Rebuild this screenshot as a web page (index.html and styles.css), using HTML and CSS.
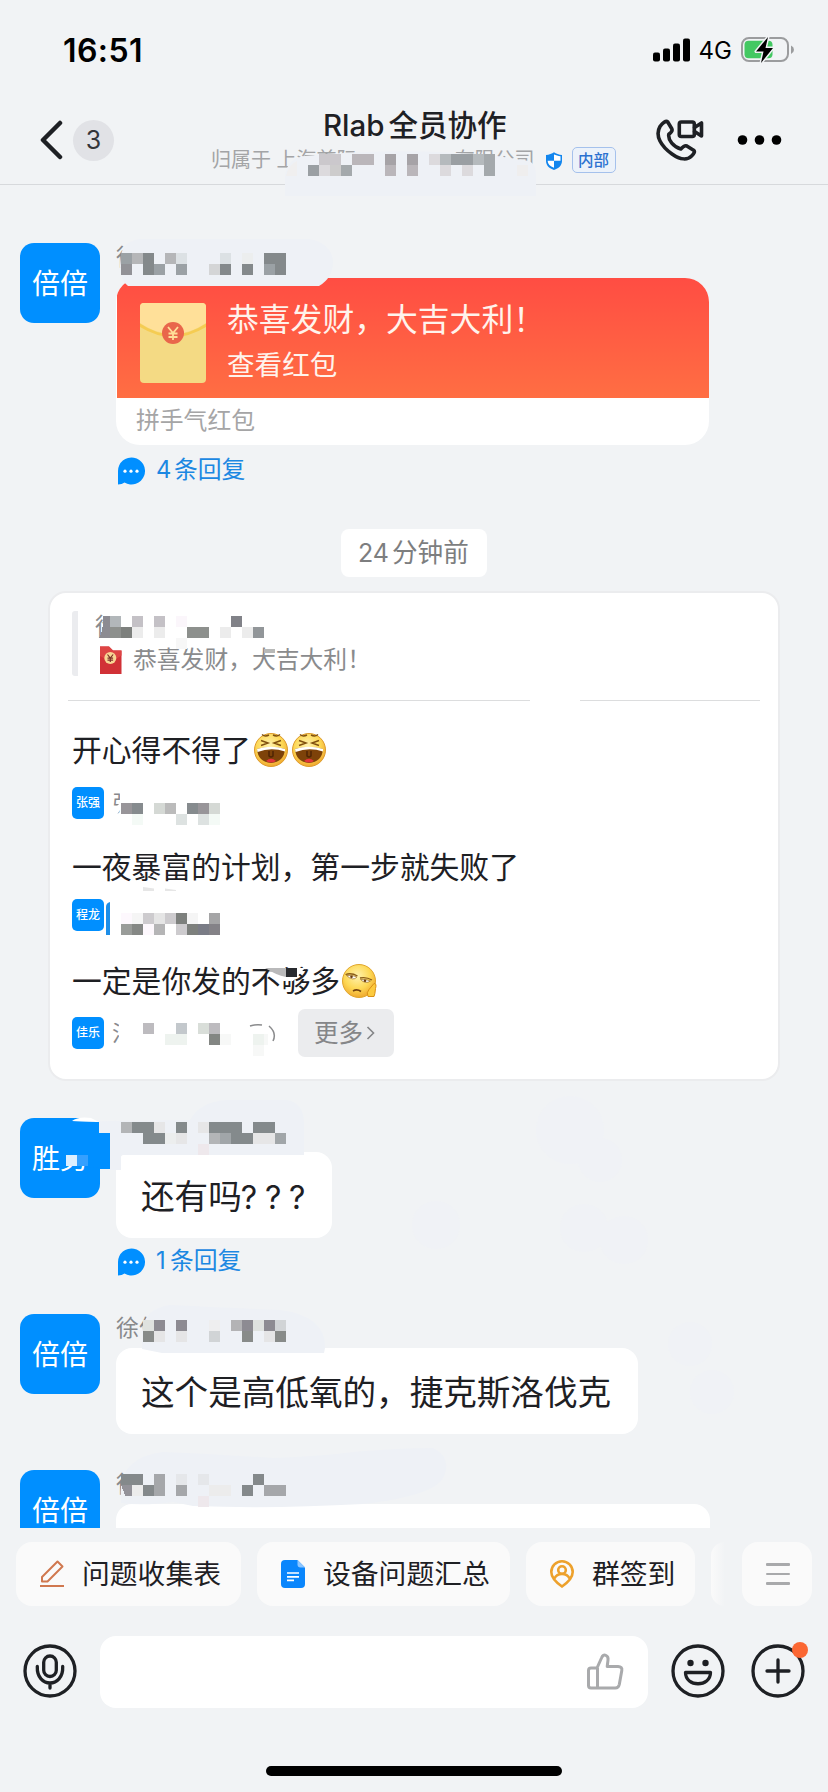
FILE: index.html
```html
<!DOCTYPE html>
<html lang="zh-CN">
<head>
<meta charset="utf-8">
<title>Rlab 全员协作</title>
<link rel="stylesheet" href="styles.css">
</head>
<body>
<div class="phone">
  <div class="status">
    <span class="clock">16:51</span>
    <div class="status-right">
      <svg width="38" height="24" viewBox="0 0 38 24"><rect x="0" y="14.500" width="7" height="9" rx="2"/><rect x="10" y="10.500" width="7" height="13" rx="2"/><rect x="20" y="5.500" width="7" height="18" rx="2"/><rect x="30" y="0.500" width="7" height="23" rx="2"/></svg>
      <span class="net">4G</span>
      <svg width="54" height="28" viewBox="0 0 54 28"><rect x="1" y="2" width="46" height="23" rx="7" fill="none" stroke="#9b9c9e" stroke-width="2"/><rect x="3.500" y="4.700" width="28" height="17.600" rx="4" fill="#43c862"/><path d="M50 9.500q3 1.500 3 4.200t-3 4.200z" fill="#9b9c9e"/><path d="M27 1L15 15.500h7.500L20 27 32 12h-7.500z" fill="#000" stroke="#f1f3f5" stroke-width="3" paint-order="stroke" stroke-linejoin="round"/></svg>
    </div>
  </div>
  <header class="header">
    <div class="back">
      <svg width="24" height="40" viewBox="0 0 24 40"><path d="M20 3L3 20l17 17" fill="none" stroke="#1e2024" stroke-width="4.500" stroke-linecap="round" stroke-linejoin="round"/></svg>
      <span class="unread">3</span>
    </div>
    <div class="heading">
      <h1 class="title">Rlab<i></i>全员协作</h1>
      <div class="org">
        <span>归属于 上海首际</span><span class="org-tail">有限公司</span>
        <svg class="shield" width="18" height="18" viewBox="0 0 18 18"><path d="M9 .2C11 1.700 14 2.700 17 3v6c0 4.500-3.500 7.500-8 9C4.500 16.500 1 13.500 1 9V3c3-.3 6-1.300 8-2.800z" fill="#1386ee"/><path d="M9 2.500v6.300h6.500V4.300C13 4 11 3.300 9 2.500zM9 8.800v7C5 14.300 2.700 12 2.600 8.800z" fill="#fff"/></svg>
        <span class="tag">内部</span>
      </div>
    </div>
    <div class="actions">
      <svg width="50" height="44" viewBox="0 0 50 44"><g fill="none" stroke="#1e2024" stroke-width="3.600" stroke-linejoin="round" stroke-linecap="round"><path d="M5 8.500C7.500 5 11 2.200 12.600 3.800l4.200 7c1 2-.5 3.600-3 5.400-1 6 5 13 12 14.800 2-2.200 3.800-4 6-3l6.800 4.200c1.800 1.400.2 3.600-2 5.800-4 4-11 4.200-19.600-2C6.500 28.500-.5 18 5 8.500z"/><rect x="24.300" y="4" width="15" height="14.500" rx="2"/><path d="M39.500 9.500l7-4.500v13l-7-4.500"/></g></svg>
      <svg width="46" height="12" viewBox="0 0 46 12"><circle cx="5.500" cy="6" r="4.800"/><circle cx="22.500" cy="6" r="4.800"/><circle cx="39.500" cy="6" r="4.800"/></svg>
    </div>
  </header>

  <main class="chat">
    <section class="msg msg-a">
      <div class="avatar">倍倍</div>
      <div class="body">
        <div class="name">徐</div>
        <div class="packet">
          <div class="packet-top">
            <svg width="66" height="80" viewBox="0 0 66 80"><rect width="66" height="80" rx="4" fill="#f4da84"/><path d="M0 20V4q0-4 4-4h58q4 0 4 4v16Q33 42 0 20z" fill="#ffe099"/><path d="M0 20.500q33 22 66 0v3.500q-33 20-66 0z" fill="#f5cc52"/><circle cx="33" cy="30" r="11" fill="#e9664b"/><path d="M28 24l5 6 5-6M33 30v7M28.500 30.500h9M28.500 34h9" fill="none" stroke="#ffdf98" stroke-width="1.800"/></svg>
            <div class="packet-text"><div class="wish">恭喜发财，大吉大利！</div><div class="open">查看红包</div></div>
          </div>
          <div class="packet-foot">拼手气红包</div>
        </div>
        <div class="replies"><svg class="bubble-icon" width="28" height="28" viewBox="0 0 28 28"><path d="M1 27.500V14a13.500 13.500 0 1 1 6.500 11.500Q5 27.500 1 27.500z"/><g fill="#fff"><circle cx="8" cy="14.200" r="1.600"/><circle cx="14" cy="14.200" r="1.600"/><circle cx="20" cy="14.200" r="1.600"/></g></svg><span class="num">4</span><span class="label">条回复</span></div>
      </div>
    </section>

    <div class="time"><span>24</span>分钟前</div>

    <section class="thread">
      <div class="quote">
        <div class="quote-name">徐</div>
        <div class="quote-line"><svg width="22" height="28" viewBox="0 0 22 28"><path d="M0 .5h9l4 4h8.500V28H0z" fill="#d13136"/><path d="M0 .5h9l4 4h8.500v5L11 16 0 10z" fill="#de4444"/><circle cx="10.300" cy="12" r="6" fill="#f8d694"/><path d="M7.500 8.500l2.800 3.500 2.800-3.500M10.300 12v4M7.500 12.200h5.600M7.500 14.200h5.600" fill="none" stroke="#7b3028" stroke-width="1.200"/></svg><span>恭喜发财，大吉大利！</span></div>
      </div>
      <div class="rule"><i></i><i></i></div>
      <div class="say say-1">开心得不得了<svg class="emo" width="36" height="36" viewBox="0 0 36 36"><use href="#laugh"/></svg><svg class="emo" width="36" height="36" viewBox="0 0 36 36"><use href="#laugh"/></svg></div>
      <div class="who who-1"><span class="mini">张强</span><span class="who-name">张</span></div>
      <div class="say say-2">一夜暴富的计划，第一步就失败了</div>
      <div class="who who-2"><span class="mini">程龙</span></div>
      <div class="say say-3">一定是你发的不够多<svg class="emo" width="36" height="36" viewBox="0 0 36 36"><circle cx="18" cy="18" r="16.500" fill="url(#skin)" stroke="#e0a62e"/><path d="M4.500 11.500q6-2 12 1.500M19 15q6-1.500 12 2" fill="none" stroke="#8a5c18" stroke-width="1.300"/><path d="M5.500 12.500q5-1 10.500 1.500-4 4.500-10.500-1.500zM19.500 16.500q5-1 10 1.500-5 3.500-10-1.500z" fill="#fff" stroke="#9a6a20" stroke-width=".7"/><circle cx="10.500" cy="13.700" r="1.300" fill="#6b3c0c"/><circle cx="24" cy="17.800" r="1.300" fill="#6b3c0c"/><path d="M12 28q4-2.500 8 .5" fill="none" stroke="#74420e" stroke-width="1.600"/><path d="M27 33.500q-2-4 1-7l5-6q3 0 1.500 5-.5 6-1.500 8z" fill="#fcca3e" stroke="#d99016"/></svg></div>
      <div class="who who-3"><span class="mini">佳乐</span><span class="who-name">汪</span><span class="gap"></span><span class="more">更多<svg width="9" height="16" viewBox="0 0 9 16"><path d="M1.500 2l6 6-6 6" fill="none" stroke="#858688" stroke-width="1.600"/></svg></span></div>
    </section>

    <section class="msg msg-b">
      <div class="avatar">胜男</div>
      <div class="body">
        <div class="name"></div>
        <div class="bubble short">还有吗<span class="marks">???</span></div>
        <div class="replies"><svg class="bubble-icon" width="28" height="28" viewBox="0 0 28 28"><path d="M1 27.500V14a13.500 13.500 0 1 1 6.500 11.500Q5 27.500 1 27.500z"/><g fill="#fff"><circle cx="8" cy="14.200" r="1.600"/><circle cx="14" cy="14.200" r="1.600"/><circle cx="20" cy="14.200" r="1.600"/></g></svg><span class="num one">1</span><span class="label">条回复</span></div>
      </div>
    </section>

    <section class="msg msg-c">
      <div class="avatar">倍倍</div>
      <div class="body">
        <div class="name">徐倍</div>
        <div class="bubble">这个是高低氧的，捷克斯洛伐克</div>
      </div>
    </section>

    <section class="msg msg-d">
      <div class="avatar">倍倍</div>
      <div class="body">
        <div class="name">徐</div>
        <div class="bubble wide"></div>
      </div>
    </section>
  </main>

  <nav class="tools">
    <div class="chips">
      <div class="chip chip-1"><svg width="24" height="28" viewBox="0 0 24 28"><g fill="none" stroke="#d0784f" stroke-width="2" stroke-linejoin="round"><path d="M0 26h24"/><path d="M2 17L17.500 1.500l5 5L7.500 21.500H2z"/></g></svg>问题收集表</div>
      <div class="chip chip-2"><svg width="24" height="28" viewBox="0 0 24 28"><path d="M4 0h12.500L24 7.500V24q0 4-4 4H4q-4 0-4-4V4q0-4 4-4z" fill="#0a86fc"/><path d="M16.500 0L24 7.500h-4.500q-3 0-3-3z" fill="#8cc5ff"/><path d="M6 13h12M6 16.800h12M6 20.300h7" stroke="#fff" stroke-width="1.700"/></svg>设备问题汇总</div>
      <div class="chip chip-3"><svg width="24" height="28" viewBox="0 0 24 28"><g fill="none" stroke="#eda12c" stroke-width="2.600"><path d="M12 26.500Q1.300 19 1.300 12a10.700 10.700 0 0 1 21.400 0Q22.700 19 12 26.500z"/><circle cx="12" cy="10" r="3.800"/><path d="M4.500 18.500q2-4.500 7.500-4.500t7.500 4.500"/></g></svg>群签到</div>
      <div class="chip-rest"></div>
    </div>
    <div class="menu"><i></i><i></i><i></i></div>
  </nav>

  <footer class="composer">
    <svg width="54" height="54" viewBox="0 0 54 54"><g fill="none" stroke="#1e2024" stroke-width="3.300" stroke-linecap="round"><circle cx="27" cy="27" r="25"/><rect x="20.700" y="12" width="12.600" height="20.500" rx="6.300"/><path d="M14.300 22.500c-1 22 26.400 22 25.400 0M27 39v5"/></g></svg>
    <div class="field"><svg width="38" height="38" viewBox="0 0 38 38"><path d="M2.500 17.500q0-2.500 2.500-2.500h6l4.500-10q1.500-4 4.500-2.500 2.500 1.200 2 4.500l-.8 6.500H32q4.500.3 3.800 4l-2.500 14q-.8 3.500-4 3.500H5q-2.500 0-2.500-2.500zM11.500 15v19" fill="none" stroke="#a9aaac" stroke-width="3" stroke-linejoin="round"/></svg></div>
    <svg width="54" height="54" viewBox="0 0 54 54"><g fill="none" stroke="#1e2024" stroke-width="3.300" stroke-linejoin="round"><circle cx="27" cy="27" r="25"/><path d="M14.500 28.500h25c0 15-25 15-25 0z"/></g><circle cx="19.500" cy="19" r="3.200" fill="#1e2024"/><circle cx="34.500" cy="19" r="3.200" fill="#1e2024"/></svg>
    <div class="add"><svg width="54" height="54" viewBox="0 0 54 54"><g fill="none" stroke="#1e2024" stroke-width="3.300" stroke-linecap="round"><circle cx="27" cy="27" r="25"/><path d="M27 16v22M16 27h22"/></g></svg><i class="dot"></i></div>
  </footer>
  <div class="home"></div>

  <!-- privacy blur over names and organisation -->
  <svg class="mask" width="828" height="1792" viewBox="0 0 828 1792">
    <defs>
      <radialGradient id="skin" cx=".45" cy=".35" r=".65"><stop offset="0" stop-color="#fff2ae"/><stop offset=".6" stop-color="#fdd855"/><stop offset="1" stop-color="#f0a92f"/></radialGradient>
      <g id="laugh"><circle cx="18" cy="18" r="16.500" fill="url(#skin)" stroke="#dd9a2d"/><path d="M4 17q14-4 28 0-1 13-14 14Q5 30 4 17z" fill="#7d4209"/><path d="M4 17q14-4.500 28 0v2.500Q18 15 4.500 20z" fill="#fff"/><path d="M13 29q5-4.500 10 0-5 3-10 0z" fill="#e3343a"/><path d="M16 19v5q2 2 4 0v-5" fill="none" stroke="#4f2504" stroke-width="1.500"/><path d="M8 8.500l7 2.500-7 2.500M28 8.500L21 11l7 2.500M9 2.500q3 2.500 7 .5M20 3q4 2 7-.5" fill="none" stroke="#81510f" stroke-width="1.500"/></g>
    </defs>
    <g class="haze">
      <path d="M285 196v-20q2-18 20-20l12-1q90-8 180 1l32 5q7 3 7 14v21z"/>
      <path d="M121 255q2-13 18-16h170q22 4 24 22 0 17-14 25H128q-8-6-8-20z"/>
      <path d="M72 1122l38-1 80-1q10-18 36-20h60q18 2 18 24v31H121v15h-11v-37H99v-11z"/>
      <path d="M142 1349v-18q2-22 28-26 60 3 110 5 46 6 45 38l-1 5H162z"/>
      <path d="M121 1498q-4-40 42-46 50 2 110 6 50-2 80-6 50-4 80-4 20 10 10 30-10 18-80 26-90 5-170 2l-20-4q-30 4-52 1z"/>
      <circle cx="570" cy="1130" r="34"/><circle cx="600" cy="1160" r="22"/><circle cx="436" cy="1225" r="24"/><circle cx="584" cy="1228" r="24"/><circle cx="624" cy="1240" r="24"/><circle cx="690" cy="1344" r="22"/><circle cx="712" cy="1392" r="22"/>
    </g>
    <path d="M286 176h11v-15q-8 3-11 15z" fill="#f0efef"/>
    <g fill="#fff">
      <path d="M103 612h160v26H103zM133 640h26v9h-26zM120 790h110v34H119q1-10 4-18l-10 14v-10l7-7zM128 797h20v10h-20zM282 968h23l-12 13h-14z"/>
      <path d="M119 1018h150v30H119z"/>
    </g>
    <path d="M72 1121q6-5 20-3h-1l8 4z" fill="#fff"/>
    <path d="M62 1122h37v11h11v36H99l-1-2q-8 2-14-1H58q3-4 4-12z" fill="#008fff"/>
    <path d="M106 935v-28q0-4 4-5v33z" fill="#1d8ee8"/>
    <path d="M143 887l11 1.500v2.500h-11zM165 888.500l11 1.500v1h-11z" fill="#e6e6e6"/>
    <path d="M264 649h11v4h-11z" fill="#b8b9b8"/>
    <path d="M265 968h21v9q-10-2-21-9z" fill="#b9b9ba"/>
    <path d="M286 968h11v9h-11z" fill="#282a2e"/>
    <path d="M250 1026q6-2 12-1M269 1026q8 7 4 15" fill="none" stroke="#8a8b8d" stroke-width="1.500"/>
    <g transform="scale(11)" class="cells">
      <path fill="#cbc8cc" d="M29 14h2v1h-2z"/><path fill="#bab6ba" d="M32 14h2v1h-2zM35 15h1v1h-1zM37 15h1v1h-1z"/><path fill="#a6a3a7" d="M35 14h1v1h-1zM37 14h1v1h-1z"/><path fill="#dcdadd" d="M39 14h1v1h-1zM40 15h1v1h-1zM42 15h1v1h-1zM29 15h1v1h-1z"/><path fill="#b5babd" d="M40 14h1v1h-1zM43 14h1v1h-1z"/><path fill="#9a9fa3" d="M41 14h2v1h-2zM28 15h1v1h-1z"/><path fill="#cdcccc" d="M30 15h1v1h-1z"/><path fill="#a4a9ac" d="M31 15h1v1h-1zM44 14h1v2h-1z"/><path fill="#efeeee" d="M47 15h1v1h-1z"/>
      <path fill="#9ba1a5" d="M11 23h1v1h-1zM14 24h1v1h-1zM16 24h1v1h-1zM24 24h1v1h-1z"/><path fill="#b5b6b8" d="M12 23h1v1h-1zM15 23h1v1h-1z"/><path fill="#84898b" d="M13 23h1v2h-1zM24 23h2v1h-2zM20 24h1v1h-1zM22 24h1v1h-1zM25 24h1v1h-1z"/><path fill="#dce1e4" d="M16 23h1v1h-1zM20 23h1v1h-1z"/><path fill="#eceeee" d="M22 23h1v1h-1z"/><path fill="#929297" d="M11 24h1v1h-1z"/><path fill="#d4d5d6" d="M19 24h1v1h-1z"/>
      <path fill="#8c8b92" d="M9.400 56h.6v2h-1q.4-.6.4-2z"/><path fill="#b2b7ba" d="M10 56h1v1h-1z"/><path fill="#c4c1c6" d="M12 56h1v1h-1zM14 56h1v1h-1z"/><path fill="#fbf6fb" d="M16 56h1v1h-1z"/><path fill="#818288" d="M21 56h1v1h-1z"/><path fill="#8d908d" d="M10 57h1v1h-1zM17 57h2v1h-2z"/><path fill="#7d807d" d="M11 57h1v1h-1z"/><path fill="#ececec" d="M12 57h1v1h-1zM14 57h1v1h-1zM20 57h1v1h-1zM22 57h1v1h-1z"/><path fill="#929699" d="M23 57h1v1h-1z"/><path fill="#f7f7f7" d="M16 58h1v1h-1z"/>
      <path fill="#989599" d="M11 73h1v1h-1zM18 73h1v1h-1z"/><path fill="#868b8e" d="M12 73h1v1h-1zM17 73h1v1h-1z"/><path fill="#d5d9d5" d="M14 73h1v1h-1zM19 73h1v1h-1z"/><path fill="#bbb" d="M15 73h1v1h-1z"/><path fill="#f4faf6" d="M12 74h1v1h-1zM19 74h1v1h-1z"/><path fill="#dde2e1" d="M16 74h1v1h-1zM18 74h1v1h-1z"/>
      <path fill="#fdf8fd" d="M11 83h1v1h-1zM13 84h1v1h-1z"/><path fill="#f5f5f5" d="M12 83h1v1h-1zM17 83h1v1h-1z"/><path fill="#cdcbce" d="M13 83h1v1h-1zM15 83h1v1h-1zM16 84h1v1h-1z"/><path fill="#e5e5e5" d="M14 83h1v1h-1z"/><path fill="#7d807d" d="M16 83h1v1h-1zM17 84h1v1h-1z"/><path fill="#a5a5a6" d="M19 83h1v1h-1z"/><path fill="#999c99" d="M11 84h1v1h-1z"/><path fill="#858885" d="M12 84h1v1h-1z"/><path fill="#b5b5b6" d="M14 84h1v1h-1z"/><path fill="#7a7c86" d="M18 84h1v1h-1z"/><path fill="#848287" d="M19 84h1v1h-1z"/>
      <path fill="#bdbbbf" d="M13 93h1v1h-1zM19 93h1v1h-1z"/><path fill="#c3c8cc" d="M16 93h1v1h-1z"/><path fill="#d9ded9" d="M18 93h1v1h-1z"/><path fill="#eef3ef" d="M15 94h2v1h-2zM23 94h1v1h-1z"/><path fill="#838683" d="M19 94h1v1h-1z"/><path fill="#f7f8f7" d="M20 94h1v1h-1zM24 94h.4v1h-.4zM23 95h1v1h-1z"/>
      <path fill="#b3b5b7" d="M11 102h1v1h-1zM19 103h1v1h-1z"/><path fill="#848a8c" d="M12 102h2v1h-2zM16 102h1v1h-1zM19 102h3v1h-3zM23 102h2v1h-2zM13 103h2v1h-2zM21 103h2v1h-2z"/><path fill="#e6e6e7" d="M14 102h1v1h-1zM18 102h1v1h-1zM16 103h1v1h-1zM23 103h2v1h-2z"/><path fill="#eceeee" d="M15 103h1v1h-1z"/><path fill="#a1a6a9" d="M20 103h1v1h-1zM25 103h1v1h-1z"/><path fill="#eee8ec" d="M18 104h1v1h-1zM18 136h1v1h-1z"/><path fill="#dcefff" d="M6 105h1v1h-1z"/><path fill="#35a0ff" d="M7 105h1v1h-1z"/>
      <path fill="#dfe2df" d="M13 120h1v1h-1zM23 120h1v1h-1z"/><path fill="#8d8b92" d="M14 120h1v1h-1zM16 120h1v1h-1zM22 120h1v1h-1zM24 120h1v1h-1z"/><path fill="#eeeeef" d="M19 120h1v1h-1z"/><path fill="#b3b3b5" d="M21 120h1v1h-1z"/><path fill="#d1d4d6" d="M25 120h1v1h-1zM19 121h1v1h-1z"/><path fill="#888b89" d="M13 121h1v1h-1zM22 121h1v1h-1zM25 121h1v1h-1z"/><path fill="#e5e5e6" d="M14 121h1v1h-1zM16 121h1v1h-1zM24 121h1v1h-1z"/>
      <path fill="#84898b" d="M11 134h2v1h-2zM23 134h1v1h-1zM13 135h1v1h-1zM22 135h1v1h-1z"/><path fill="#a5a7aa" d="M14 134h1v2h-1zM16 135h1v1h-1zM24 135h2v1h-2z"/><path fill="#e5e7ea" d="M16 134h1v1h-1zM18 134h1v1h-1z"/><path fill="#939299" d="M11 135h1v1h-.6z"/><path fill="#ececec" d="M12 135h1v1h-1zM19 135h2v1h-2z"/>
    </g>
  </svg>
</div>
</body>
</html>
```
FILE: styles.css
```css
* { box-sizing: border-box; }
body { margin: 0; background: #f1f3f5; font-family: Inter, "Noto Sans CJK SC", sans-serif; color: #1e2024; }
svg { display: block; flex: none; }
i { font-style: normal; display: block; }
.phone { position: relative; width: 828px; height: 1792px; overflow: hidden; display: flex; flex-direction: column; white-space: nowrap; }

.status { height: 100px; padding: 0 33px 0 63px; display: flex; justify-content: space-between; align-items: center; color: #000; }
.clock { font-size: 32px; font-weight: 600; line-height: 40px; letter-spacing: .4px; padding-top: 1px; }
.status-right { display: flex; align-items: center; }
.net { font-size: 24px; line-height: 28px; margin: 2px 9px 0 8px; }

.header { height: 85px; border-bottom: 1px solid #d7d9dc; display: flex; justify-content: space-between; }
.back { display: flex; align-items: center; gap: 9px; width: 211px; height: 80px; padding-left: 40px; }
.unread { width: 41px; height: 41px; border-radius: 50%; background: #e1e2e6; font-size: 25px; line-height: 41px; text-align: center; color: #34363a; }
.heading { flex: 1; }
.title { margin: 4px 0 0 112px; height: 40px; font-size: 29.500px; line-height: 42px; font-weight: 500; display: flex; }
.title i { width: 4px; }
.org { display: flex; align-items: center; height: 32px; font-size: 20px; line-height: 30px; color: #a3a4a6; }
.org-tail { margin-left: 98px; }
.shield { margin-left: 10px; margin-top: 1px; }
.tag { margin-left: 9px; width: 44px; height: 26px; border: 1px solid #a5c1ec; border-radius: 5px; background: #ecf2fa; color: #2b71d0; font-size: 15.500px; line-height: 25px; text-align: center; font-weight: 500; }
.actions { display: flex; align-items: center; gap: 32px; height: 80px; padding-right: 45px; }

.chat { height: 1343px; overflow: hidden; }
.msg { display: flex; gap: 16px; padding-left: 20px; }
.msg-a { padding-top: 58px; height: 344px; }
.avatar { width: 80px; height: 80px; border-radius: 14px; background: #008fff; color: #fff; font-size: 28px; line-height: 82px; text-align: center; flex: none; }
.name { height: 34px; font-size: 23px; line-height: 28px; color: #88898c; }
.packet { width: 593px; height: 168px; border-radius: 24px; background: #fff; overflow: hidden; padding-left: 1px; }
.msg-a .name { height: 35px; }
.msg-a .packet { height: 167px; }
.packet-top { height: 120px; display: flex; padding: 25px 0 0 23px; gap: 21px; background: linear-gradient(#ff4d43, #ff6e43); color: #fff3ec; }
.wish { font-size: 31.800px; line-height: 34px; }
.open { font-size: 27.600px; line-height: 32px; margin-top: 12px; }
.packet-foot { padding-left: 19px; font-size: 23.800px; line-height: 45px; color: #a5a5a6; }
.replies { display: flex; align-items: center; height: 30px; line-height: 28px; margin-top: 11px; color: #1c88e2; font-size: 23.800px; padding-left: 1px; }
.bubble-icon { fill: #008fff; }
.num { width: 18px; margin-left: 11px; margin-top: -2px; }
.num.one { width: 14px; }
.label { margin-top: -3px; }

.time { width: 146px; height: 48px; border-radius: 8px; background: #fff; margin: 0 0 14px 341px; color: #7d7e7f; font-size: 25.600px; line-height: 48px; display: flex; padding-left: 17px; }
.time span { width: 34px; font-size: 25px; }

.thread { width: 732px; height: 490px; margin-left: 48px; border: 2px solid #ebecee; border-radius: 18px; background: #fff; padding: 18px 18px 0; }
.quote { margin-left: 4px; height: 65px; border-left: 6px solid #ebecef; border-radius: 3px; padding-left: 17px; color: #8a8b8d; font-size: 23.800px; }
.quote-name { line-height: 32px; height: 32px; }
.quote-line { display: flex; gap: 11px; height: 34px; line-height: 32px; padding-left: 5px; align-items: center; }
.rule { display: flex; gap: 50px; margin-top: 24px; }
.rule i { height: 1px; width: 462px; background: #dcddde; }
.rule i + i { width: 180px; }
.say { display: flex; align-items: center; height: 40px; margin: 28px 0 0 4px; font-size: 29.800px; gap: 2px; line-height: 40px; }
.say-1 { line-height: 42px; padding-top: 1px; }
.say + .who { margin-top: 18px; }
.who { display: flex; align-items: center; height: 32px; margin-left: 4px; }
.mini { width: 32px; height: 32px; border-radius: 5px; background: #008fff; color: #fff; font-size: 12px; line-height: 32px; text-align: center; font-weight: 500; }
.who-name { width: 22px; margin-left: 8px; font-size: 22px; line-height: 28px; color: #88898c; }
.say-2 { margin-top: 28px; line-height: 38px; }
.say + .who-2 { margin-top: 12px; }
.say-3 { margin-top: 30px; line-height: 38px; gap: 1px; }
.say + .who-3 { margin-top: 16px; }
.gap { width: 164px; }
.more { width: 96px; height: 48px; border-radius: 7px; background: #ebecee; color: #858688; font-size: 24.500px; line-height: 46px; padding-left: 16px; display: flex; align-items: center; gap: 3px; }

.msg-b { padding-top: 37px; height: 233px; }
.msg-b .replies { margin-top: 9px; }
.bubble { height: 86px; width: fit-content; border-radius: 16px; background: #fff; padding: 0 27px 0 25px; font-size: 33.600px; line-height: 90px; }
.bubble.short { width: 216px; }
.marks { letter-spacing: 7.800px; font-size: 32px; margin-left: -1px; }
.msg-c { height: 156px; }
.bubble.wide { width: 594px; }

.tools { height: 108px; padding: 14px 16px 0; display: flex; justify-content: space-between; }
.chips { display: flex; gap: 16px; }
.chip { height: 64px; border-radius: 16px; background: #fafafa; display: flex; align-items: center; gap: 18px; padding-left: 24px; font-size: 27.800px; line-height: 64px; }
.chip-1 { width: 225px; }
.chip-2 { width: 253px; }
.chip-3 { width: 169px; }
.chip-rest { width: 14px; height: 64px; border-radius: 16px 0 0 16px; background: linear-gradient(90deg, #fafafa, #f1f3f5); }
.menu { width: 70px; height: 64px; border-radius: 16px; background: #fafafa; display: flex; flex-direction: column; align-items: center; justify-content: center; gap: 7px; padding-left: 2px; }
.menu i { width: 24px; height: 2.500px; background: #a8a9ab; border-radius: 1px; }

.composer { display: flex; height: 130px; padding-left: 23px; }
.composer > svg, .add { margin-top: 8px; }
.add { position: relative; margin-left: 26px; }
.field { width: 548px; height: 72px; margin: 0 23px; border-radius: 16px; background: #fff; display: flex; align-items: center; justify-content: flex-end; padding-right: 24px; }
.dot { position: absolute; right: -3px; top: -2px; width: 16px; height: 16px; border-radius: 50%; background: #fb6733; }
.home { width: 296px; height: 10px; border-radius: 5px; background: #000; margin-left: 266px; }

.mask { position: absolute; left: 0; top: 0; pointer-events: none; }
.haze { fill: #eef1f6; }
.haze circle { fill: #f0f2f6; }
.cells { shape-rendering: crispEdges; }
```
